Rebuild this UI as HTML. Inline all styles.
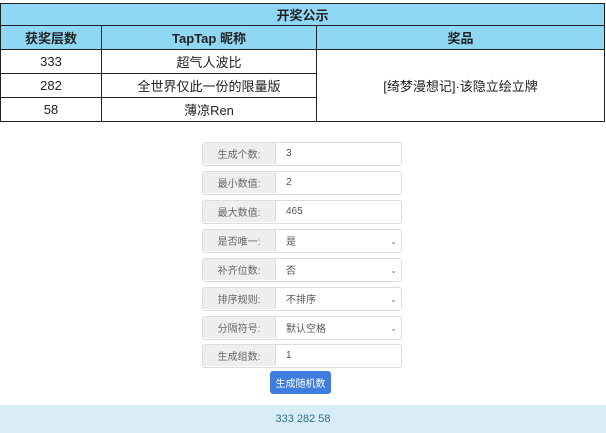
<!DOCTYPE html>
<html><head><meta charset="utf-8"><style>
body{margin:0;width:606px;height:433px;background:#fff;font-family:"Liberation Sans","Noto Sans CJK SC",sans-serif;position:relative;overflow:hidden}
table{position:absolute;left:0;top:3px;width:605px;border-collapse:collapse;font-size:13px;color:#222}
td,th{border:1px solid #222;text-align:center;padding:0;height:23px}
th{background:#8fd8f5;font-weight:bold;font-size:13px}
.row{position:absolute;left:202px;width:198px;height:22px;border:1px solid #ddd;border-radius:3px;font-size:10px;color:#555;display:flex}
.row .l{width:72px;background:#eee;border-right:1px solid #ddd;display:flex;align-items:center;justify-content:center;color:#666;height:21px}
.row .v{flex:1;padding-left:10px;display:flex;align-items:center;color:#555;position:relative;height:21px}
.ar{position:absolute;right:4px;top:7px;font-size:8px;color:#777;line-height:10px}
.btn{position:absolute;left:270px;top:371px;width:61px;height:23px;background:#3f7ee0;border-radius:3px;color:#fff;font-size:10px;display:flex;align-items:center;justify-content:center}
.res{position:absolute;left:0;top:405px;width:606px;height:28px;background:#d9edf7;color:#31708f;font-size:11px;display:flex;align-items:center;justify-content:center}
</style></head><body>
<table>
<tr><th colspan="3" style="height:21px">开奖公示</th></tr>
<tr><th style="width:100px">获奖层数</th><th style="width:214px">TapTap 昵称</th><th>奖品</th></tr>
<tr><td>333</td><td>超气人波比</td><td rowspan="3">[绮梦漫想记]·该隐立绘立牌</td></tr>
<tr><td>282</td><td>全世界仅此一份的限量版</td></tr>
<tr><td>58</td><td>薄凉Ren</td></tr>
</table>
<div class="row" style="top:142px"><div class="l">生成个数:</div><div class="v">3</div></div>
<div class="row" style="top:171px"><div class="l">最小数值:</div><div class="v">2</div></div>
<div class="row" style="top:200px"><div class="l">最大数值:</div><div class="v">465</div></div>
<div class="row" style="top:229px"><div class="l">是否唯一:</div><div class="v">是<span class="ar">⌄</span></div></div>
<div class="row" style="top:258px"><div class="l">补齐位数:</div><div class="v">否<span class="ar">⌄</span></div></div>
<div class="row" style="top:287px"><div class="l">排序规则:</div><div class="v">不排序<span class="ar">⌄</span></div></div>
<div class="row" style="top:316px"><div class="l">分隔符号:</div><div class="v">默认空格<span class="ar">⌄</span></div></div>
<div class="row" style="top:344px"><div class="l">生成组数:</div><div class="v">1</div></div>
<div class="btn">生成随机数</div>
<div class="res">333 282 58</div>
</body></html>
